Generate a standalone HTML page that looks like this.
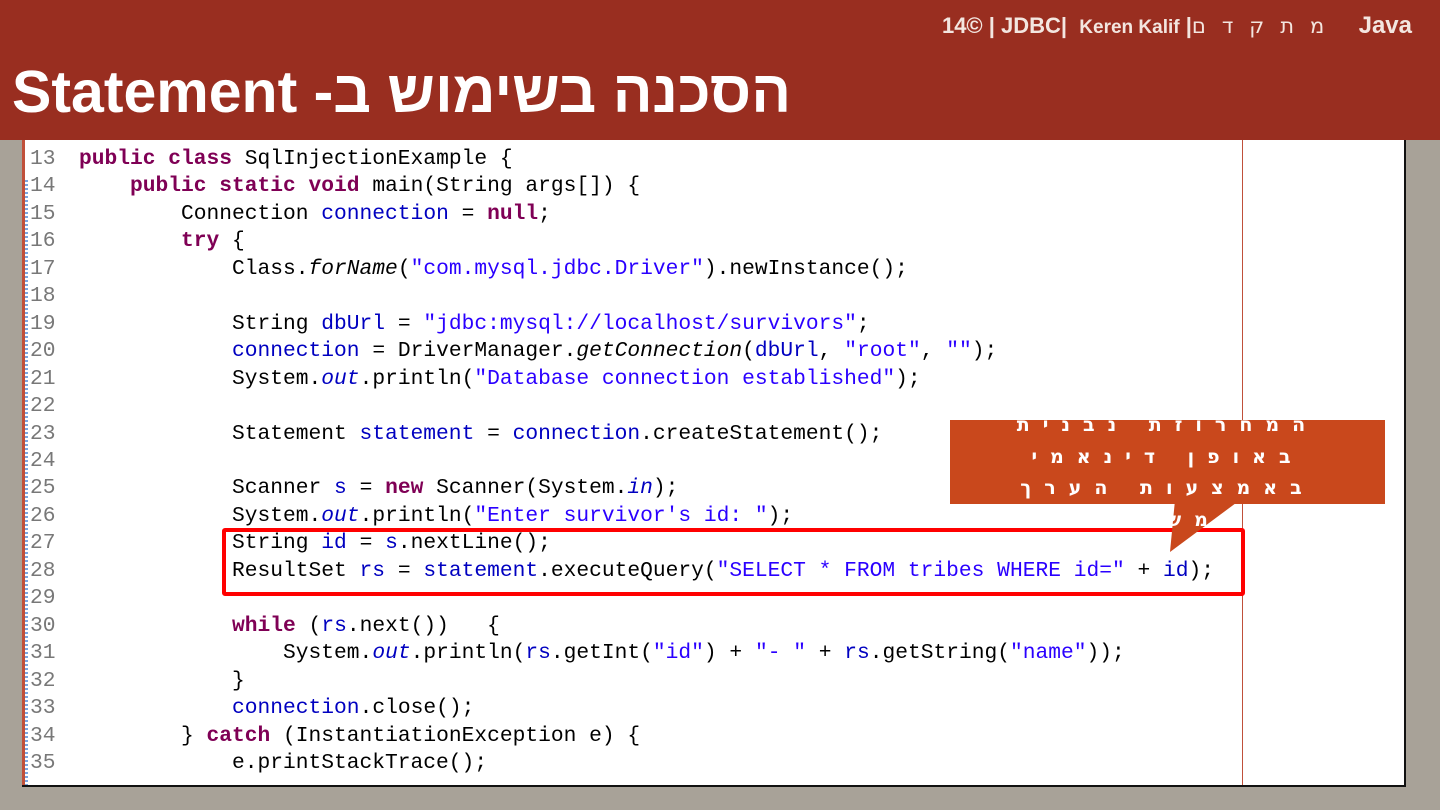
<!DOCTYPE html>
<html><head><meta charset="utf-8"><style>
body{margin:0;width:1440px;height:810px;overflow:hidden;background:#a8a298;position:relative;font-family:"Liberation Sans",sans-serif}
.hdr{position:absolute;left:0;top:0;width:1440px;height:140px;background:#992e20}
.top{position:absolute;right:28px;top:12px;color:#f3e6e0;font-weight:bold;font-size:22px;white-space:nowrap;direction:ltr}
.title{position:absolute;left:12px;top:58px;color:#fff;font-weight:bold;font-size:59px;white-space:nowrap;font-family:"Liberation Sans","Noto Sans CJK SC",sans-serif;direction:rtl}
.panel{position:absolute;left:22px;top:140px;width:1382px;height:645px;background:#fff;border-right:2px solid #111;border-bottom:2px solid #111}
.inner{position:absolute;left:0;top:0;width:1220px;height:645px;border-right:1px solid #c0503a}
.gut{position:absolute;left:0;top:0;width:3px;height:645px;background:#c0503a}
.ruler{position:absolute;left:3px;top:40px;width:3px;height:605px;background:repeating-linear-gradient(#7aa6e0 0 2px,#fff 2px 4px)}
pre{margin:0;position:absolute;left:0;top:6px;font-family:"Liberation Mono",monospace;font-size:21.25px;line-height:27.45px;color:#000}
.ln{color:#787878;display:inline-block;width:57px;padding-left:8px;box-sizing:border-box}
.k{color:#7f0055;font-weight:bold}.s{color:#2a00ff}.f{color:#0000c0}.i{font-style:italic}
.redbox{position:absolute;left:222px;top:528px;width:1015px;height:60px;border:4px solid #f00;border-radius:3px}
.callout{position:absolute;left:950px;top:420px;width:435px;height:84px;background:#c9481c}
.clip{position:absolute;left:950px;top:420px;width:435px;height:140px;overflow:hidden}
.ctxt{position:absolute;left:0;width:435px;top:-10px;text-align:center;color:#fff;font-weight:bold;font-size:19px;line-height:31.5px;letter-spacing:13px;direction:rtl;white-space:nowrap;font-family:"DejaVu Sans",sans-serif}
</style></head><body>
<div class="hdr"></div>
<div class="top">14© | JDBC|&nbsp; <span style="font-size:19px">Keren Kalif</span> |<span style="font-weight:normal;letter-spacing:16px;font-family:'DejaVu Sans',sans-serif;unicode-bidi:bidi-override;direction:ltr;font-size:21px">םדקתמ</span>&nbsp;&nbsp;&nbsp;<span style="font-size:24px">Java</span></div>
<div class="title">הסכנה בשימוש ב- Statement</div>
<div class="panel"><div class="inner"></div><div class="gut"></div><div class="ruler"></div>
<pre><span class="ln">13</span><span class="k">public class</span> SqlInjectionExample {
<span class="ln">14</span>    <span class="k">public static void</span> main(String args[]) {
<span class="ln">15</span>        Connection <span class="f">connection</span> = <span class="k">null</span>;
<span class="ln">16</span>        <span class="k">try</span> {
<span class="ln">17</span>            Class.<span class="i">forName</span>(<span class="s">"com.mysql.jdbc.Driver"</span>).newInstance();
<span class="ln">18</span>
<span class="ln">19</span>            String <span class="f">dbUrl</span> = <span class="s">"jdbc:mysql://localhost/survivors"</span>;
<span class="ln">20</span>            <span class="f">connection</span> = DriverManager.<span class="i">getConnection</span>(<span class="f">dbUrl</span>, <span class="s">"root"</span>, <span class="s">""</span>);
<span class="ln">21</span>            System.<span class="f i">out</span>.println(<span class="s">"Database connection established"</span>);
<span class="ln">22</span>
<span class="ln">23</span>            Statement <span class="f">statement</span> = <span class="f">connection</span>.createStatement();
<span class="ln">24</span>
<span class="ln">25</span>            Scanner <span class="f">s</span> = <span class="k">new</span> Scanner(System.<span class="f i">in</span>);
<span class="ln">26</span>            System.<span class="f i">out</span>.println(<span class="s">"Enter survivor's id: "</span>);
<span class="ln">27</span>            String <span class="f">id</span> = <span class="f">s</span>.nextLine();
<span class="ln">28</span>            ResultSet <span class="f">rs</span> = <span class="f">statement</span>.executeQuery(<span class="s">"SELECT * FROM tribes WHERE id="</span> + <span class="f">id</span>);
<span class="ln">29</span>
<span class="ln">30</span>            <span class="k">while</span> (<span class="f">rs</span>.next())   {
<span class="ln">31</span>                System.<span class="f i">out</span>.println(<span class="f">rs</span>.getInt(<span class="s">"id"</span>) + <span class="s">"- "</span> + <span class="f">rs</span>.getString(<span class="s">"name"</span>));
<span class="ln">32</span>            }
<span class="ln">33</span>            <span class="f">connection</span>.close();
<span class="ln">34</span>        } <span class="k">catch</span> (InstantiationException e) {
<span class="ln">35</span>            e.printStackTrace();
</pre></div>
<div class="redbox"></div>
<svg style="position:absolute;left:0;top:0" width="1440" height="810"><polygon points="1175,500 1240,500 1170,552" fill="#c9481c"/></svg>
<div class="callout"></div>
<div class="clip"><div class="ctxt">המחרוזת נבנית<br>באופן דינאמי<br>באמצעות הערך<br>שמשתמש</div></div>
</body></html>
